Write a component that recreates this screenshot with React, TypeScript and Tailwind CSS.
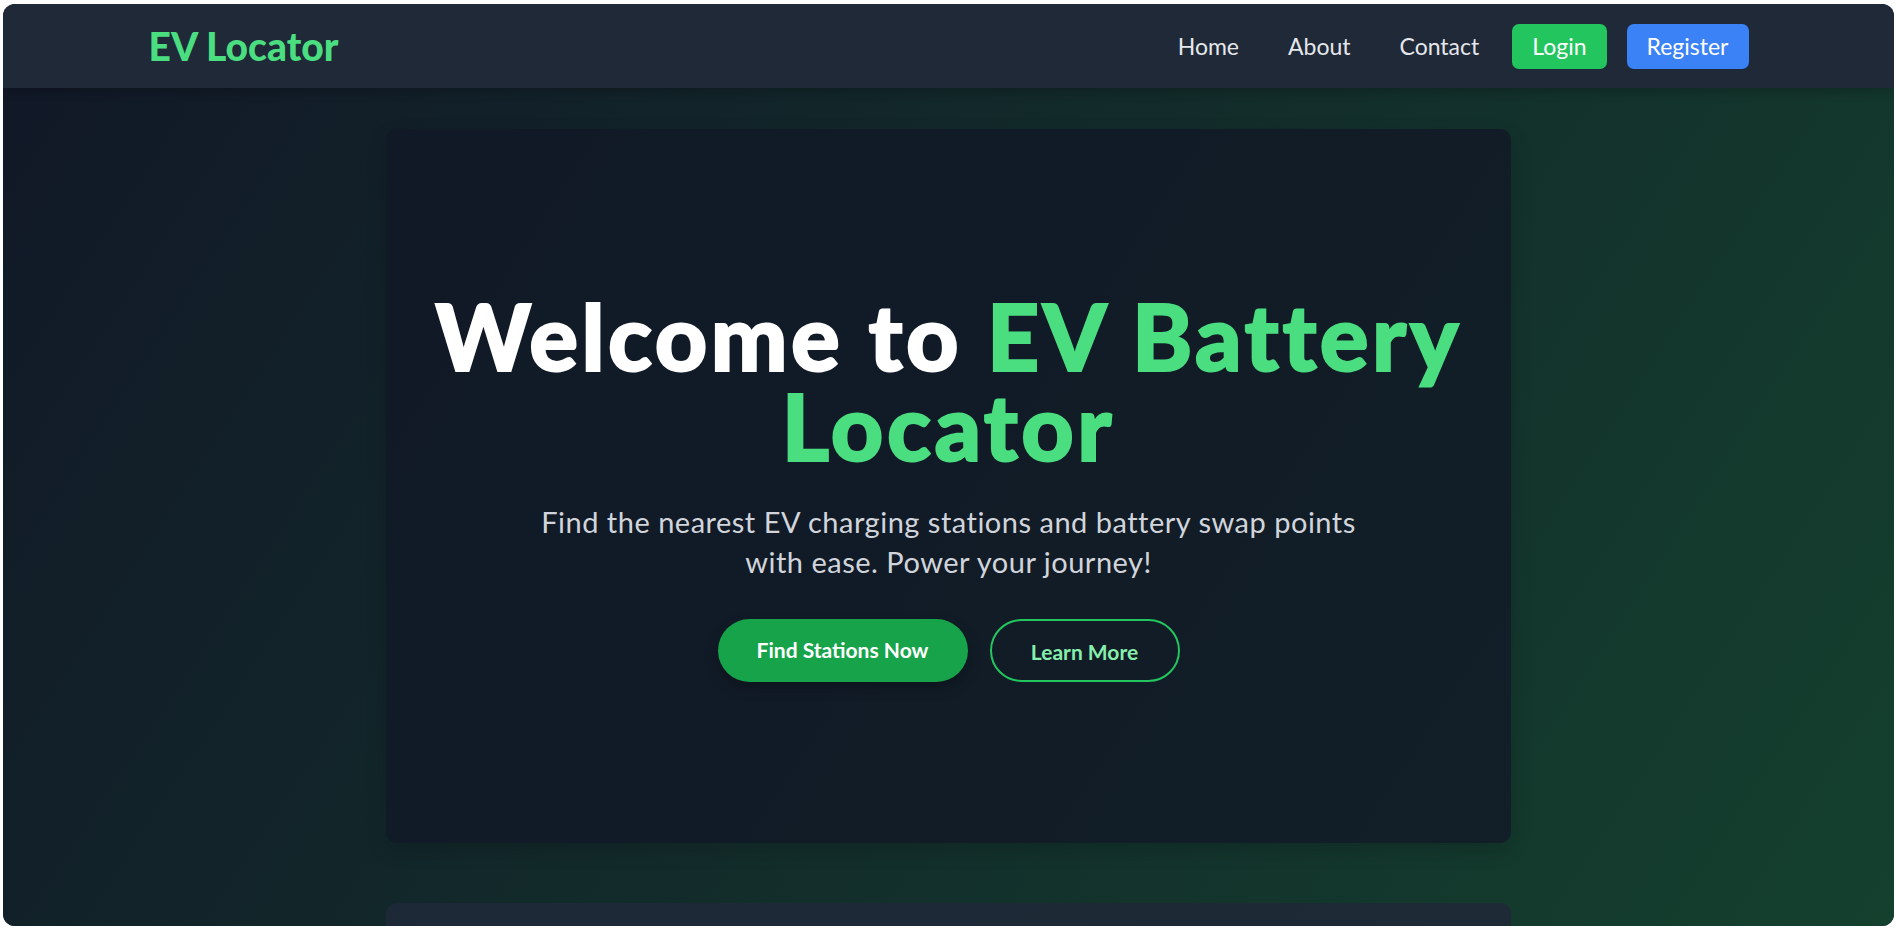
const navLinks = ["Home", "About", "Contact"];

const Navbar = () => {
  return (
    <nav className="h-[84px] shrink-0 bg-[#1f2937] shadow-[0_4px_10px_rgba(0,0,0,0.2)] relative z-10">
      <div className="w-[1600px] mx-auto h-full flex items-center justify-between">
        {/* Logo */}
        <span className="text-[39px] font-black text-[#4ade80] leading-none">EV Locator</span>

        {/* Links + auth buttons */}
        <div className="flex items-center">
          <div className="flex items-center gap-[49px]">
            {navLinks.map((link) => (
              <a key={link} href="#" className="text-[23px] text-[#e5e7eb] leading-none">
                {link}
              </a>
            ))}
          </div>
          <button className="ml-[33px] h-[45px] px-[20px] rounded-[7px] bg-[#22c55e] text-white text-[23px] leading-none">
            Login
          </button>
          <button className="ml-[20px] h-[45px] px-[20px] rounded-[7px] bg-[#3b82f6] text-white text-[23px] leading-none">
            Register
          </button>
        </div>
      </div>
    </nav>
  );
};

const Hero = () => {
  return (
    <section className="w-[1125px] h-[714px] shrink-0 rounded-[11px] bg-[#111827]/80 shadow-[0_8px_20px_rgba(0,0,0,0.15)] flex flex-col items-center justify-center text-center">
      {/* Heading */}
      <h1 className="text-[91px] font-black leading-[90px] tracking-[3.5px] text-white [-webkit-text-stroke:2px_currentColor]">
        Welcome to <span className="text-[#4ade80]">EV Battery</span>
        <br />
        <span className="text-[#4ade80]">Locator</span>
      </h1>

      {/* Description */}
      <p className="mt-[31px] text-[29px] leading-[40px] tracking-[0.5px] text-[#d1d5db]">
        Find the nearest EV charging stations and battery swap points
        <br />
        with ease. Power your journey!
      </p>

      {/* Buttons */}
      <div className="mt-[37px] flex items-center gap-[22px]">
        <a
          href="#"
          className="h-[63px] w-[250px] rounded-full bg-[#16a34a] text-white text-[21px] font-bold flex items-center justify-center shadow-[0_6px_14px_rgba(0,0,0,0.25)]"
        >
          Find Stations Now
        </a>
        <a
          href="#"
          className="h-[63px] w-[190px] rounded-full border-2 border-[#22c55e] text-[#86efac] text-[21px] font-bold flex items-center justify-center pt-[3px]"
        >
          Learn More
        </a>
      </div>
    </section>
  );
};

export default function App() {
  return (
    <div className="w-full h-[929px] bg-white pt-[4px] pl-[3px] pr-[2px] pb-[3px] font-['Lato',sans-serif]">
      <div className="h-full rounded-[12px] overflow-hidden flex flex-col bg-[#1f2937]">
        <Navbar />
        <main className="flex-1 overflow-hidden flex flex-col items-center pt-[41px] bg-[linear-gradient(123deg,#111827,#14402e)]">
          <Hero />
          {/* Next section, cut off by the window */}
          <section className="mt-[60px] w-[1125px] h-[400px] shrink-0 rounded-[11px] bg-[#1f2937]/90" />
        </main>
      </div>
    </div>
  );
}
